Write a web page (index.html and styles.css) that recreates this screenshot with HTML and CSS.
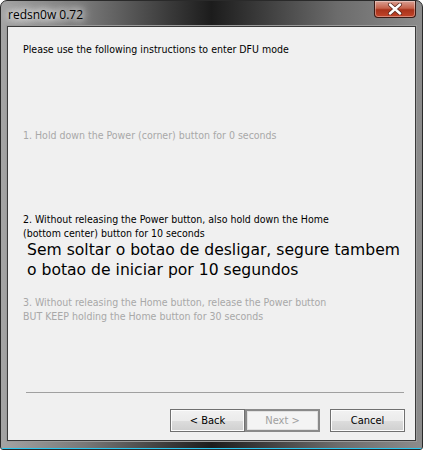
FILE: index.html
```html
<!DOCTYPE html>
<html>
<head>
<meta charset="utf-8">
<link rel="stylesheet" href="styles.css">
</head>
<body>
<div class="window">
  <div class="titlebar">
    <div class="title">redsn0w 0.72</div>
    <div class="close">
      <svg width="16" height="12" viewBox="0 0 16 12"><path d="M3 1.5 L13 10.5 M13 1.5 L3 10.5" stroke="#5a2a20" stroke-width="4" stroke-linecap="round"/><path d="M3 1.5 L13 10.5 M13 1.5 L3 10.5" stroke="#ffffff" stroke-width="2.4" stroke-linecap="round"/></svg>
    </div>
  </div>
  <div class="client">
    <p class="intro">Please use the following instructions to enter DFU mode</p>
    <p class="step step1 disabled">1. Hold down the Power (corner) button for 0 seconds</p>
    <p class="step step2">2. Without releasing the Power button, also hold down the Home<br>(bottom center) button for 10 seconds</p>
    <p class="big">Sem soltar o botao de desligar, segure tambem<br>o botao de iniciar por 10 segundos</p>
    <p class="step step3 disabled">3. Without releasing the Home button, release the Power button<br>BUT KEEP holding the Home button for 30 seconds</p>
    <div class="spacer"></div>
    <div class="sep"></div>
    <div class="buttons">
      <button class="btn">&lt; Back</button>
      <button class="btn btn-disabled">Next &gt;</button>
      <button class="btn btn-cancel">Cancel</button>
    </div>
  </div>
  <div class="bottomframe"></div>
</div>
</body>
</html>
```
FILE: styles.css
```css
html, body {
  margin: 0;
  padding: 0;
  background: #ffffff;
}
.window {
  width: 423px;
  height: 450px;
  box-sizing: border-box;
  display: flex;
  flex-direction: column;
  border-radius: 7px 7px 3px 3px;
  background: linear-gradient(90deg, #a4a4a4 0%, #787878 20%, #3a3a3a 40%, #1c1c1c 50%, #3c3c3c 62%, #6c6c6c 80%, #8c8c8c 100%);
  border: 1px solid #2a2a2a;
  overflow: hidden;
}
.titlebar {
  height: 25px;
  display: flex;
  align-items: flex-start;
  justify-content: space-between;
  flex-shrink: 0;
}
.title {
  font-family: "Open Sans", "DejaVu Sans", sans-serif;
  font-size: 12px;
  color: #000;
  padding: 5px 0 0 7px;
  text-shadow: 0 0 6px #fff, 0 0 10px #fff, 0 0 12px #eee;
}
.close {
  width: 42px;
  height: 17px;
  margin-right: 6px;
  box-sizing: border-box;
  border: 1px solid #3a1a14;
  border-top: none;
  border-radius: 0 0 4px 4px;
  background: linear-gradient(180deg, #d9a093 0%, #c5624a 45%, #a8321a 55%, #c2452a 100%);
  display: flex;
  align-items: center;
  justify-content: center;
  box-shadow: inset 0 0 0 1px rgba(255,255,255,0.35);
}
.client {
  flex: 1;
  margin: 0 6px;
  background: #f0f0f0;
  border: 1px solid #3a3a3a;
  box-shadow: 0 0 0 1px #9a9a9a;
  display: flex;
  flex-direction: column;
  padding: 0 0 8px 15px;
  font-family: "DejaVu Sans Condensed", "DejaVu Sans", sans-serif;
  font-size: 10.5px;
  color: #000;
}
p {
  margin: 0;
}
.intro {
  margin-top: 16px;
  line-height: 13px;
}
.disabled {
  color: #a8a8a8;
}
.step {
  line-height: 14px;
}
.step1 {
  margin-top: 72px;
}
.step2 {
  margin-top: 70px;
}
.big {
  font-family: "DejaVu Sans", sans-serif;
  font-size: 15.6px;
  line-height: 20px;
  margin: 0 0 0 4px;
}
.step3 {
  margin-top: 15px;
}
.spacer {
  flex: 1;
}
.sep {
  height: 1px;
  background: #a0a0a0;
  margin: 0 11px 16px 3px;
}
.buttons {
  display: flex;
  justify-content: flex-end;
  margin-right: 10px;
}
.btn {
  width: 75px;
  height: 23px;
  font-family: "DejaVu Sans Condensed", "DejaVu Sans", sans-serif;
  font-size: 11px;
  color: #000;
  background: linear-gradient(180deg, #f2f2f2 0%, #ebebeb 50%, #dddddd 51%, #cfcfcf 100%);
  border: 1px solid #707070;
  border-radius: 0;
  padding: 0;
  box-shadow: inset 0 0 0 1px #fcfcfc;
}
.btn-disabled {
  color: #a0a0a0;
  background: #f4f4f4;
  border: 2px solid #8a8a8a;
  box-shadow: inset 0 0 0 1px #e0e0e0;
}
.btn-cancel {
  margin-left: 10px;
}
.bottomframe {
  height: 7px;
  flex-shrink: 0;
  border-bottom: 1px solid #28c8f0;
}
```
